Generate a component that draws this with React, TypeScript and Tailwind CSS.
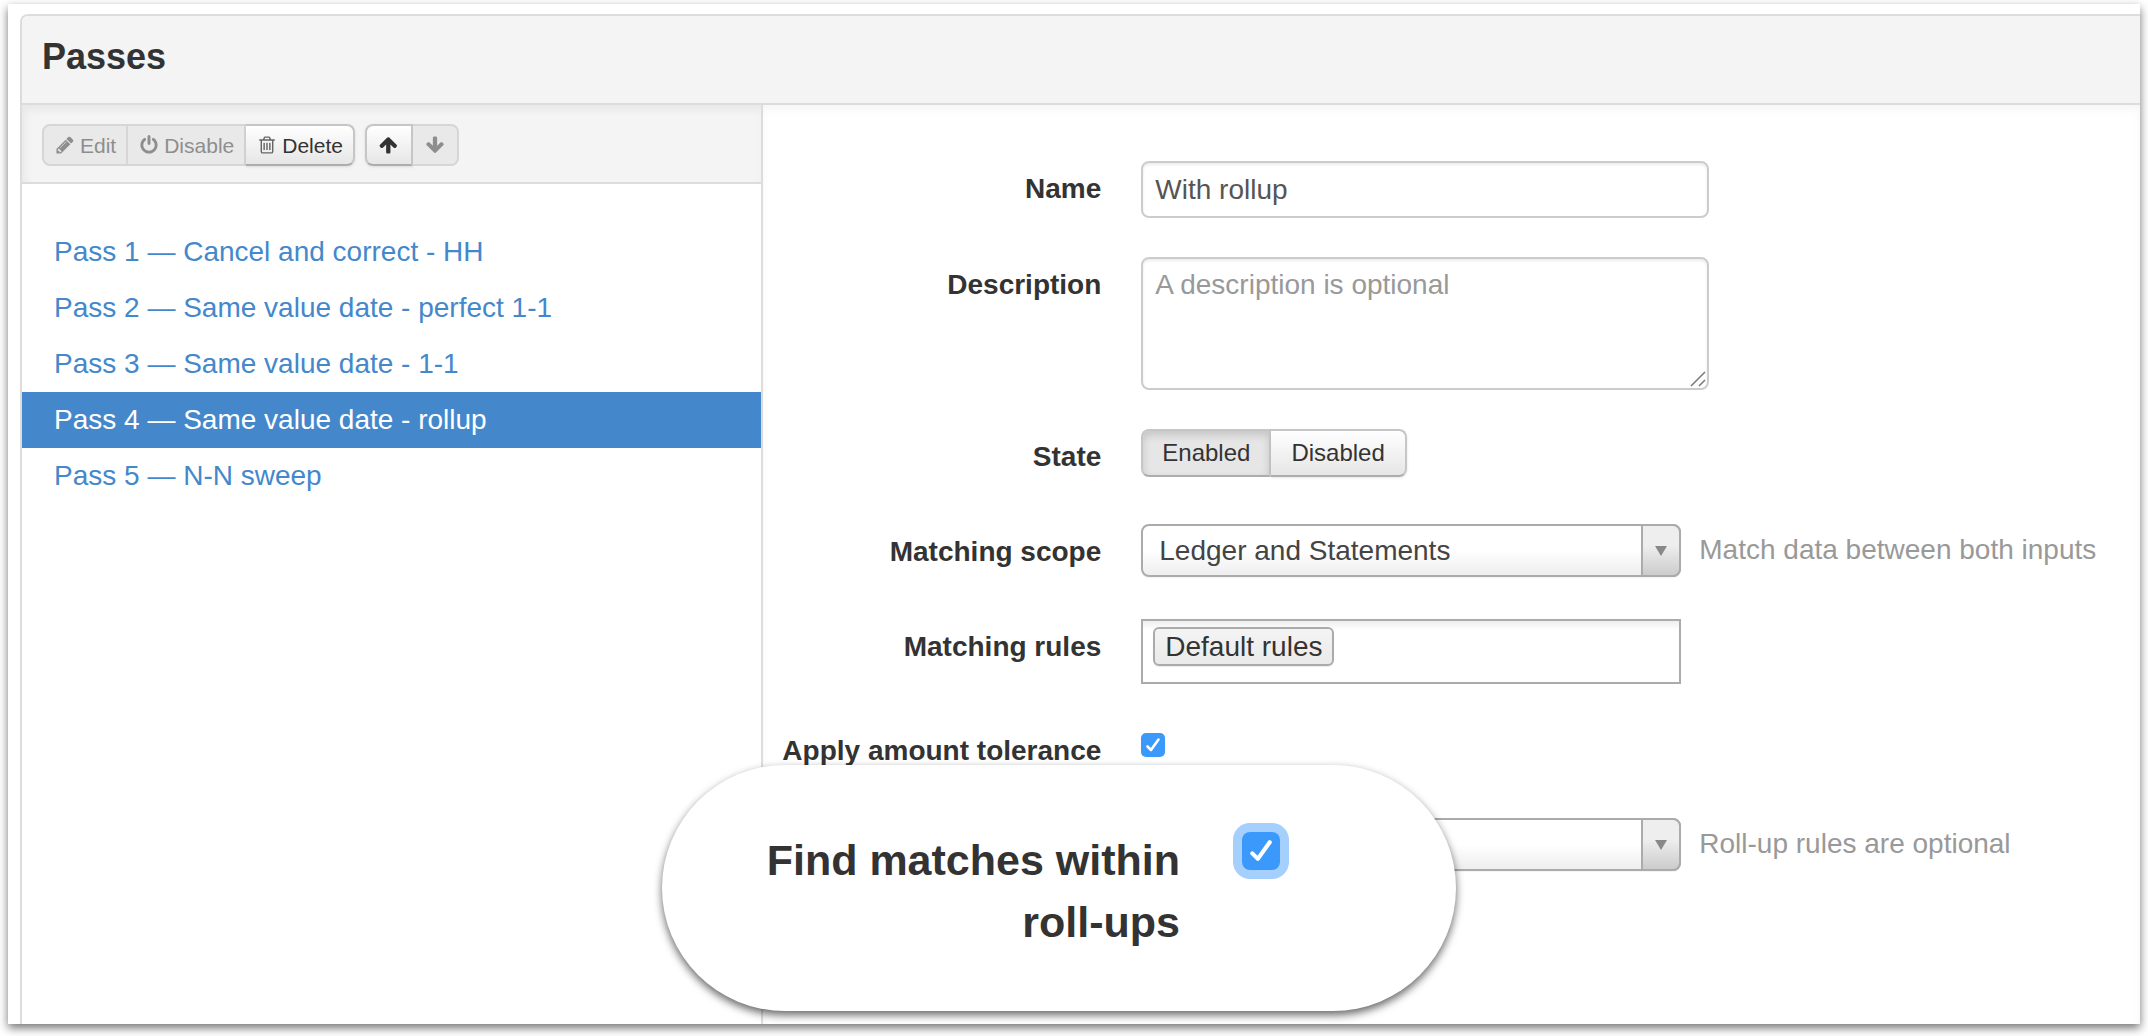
import React, { useState } from 'react';

function Icon({ d }: { d: string }) {
  return (
    <svg viewBox="0 0 1792 1792" className="mx-px size-5 shrink-0" fill="currentColor" aria-hidden="true">
      <path d={d} />
    </svg>
  );
}

const PENCIL =
  'M491 1536l91-91-235-235-91 91v107h128v128h107zm523-928q0-22-22-22-10 0-17 7l-542 542q-7 7-7 17 0 22 22 22 10 0 17-7l542-542q7-7 7-17zm-54-192l416 416-832 832h-416v-416zm683 96q0 53-37 90l-166 166-416-416 166-165q36-38 90-38 53 0 91 38l235 234q37 39 37 91z';
const POWER =
  'M1664 896q0 156-61 298t-164 245-245 164-298 61-298-61-245-164-164-245-61-298q0-182 80.5-343t226.5-270q43-32 95.5-25t83.5 50q32 42 24.5 94.5t-49.5 84.5q-98 74-151.5 181t-53.5 228q0 104 40.5 198.5t109.5 163.5 163.5 109.5 198.5 40.5 198.5-40.5 163.5-109.5 109.5-163.5 40.5-198.5q0-121-53.5-228t-151.5-181q-42-32-49.5-84.5t24.5-94.5q31-43 84-50t95 25q146 109 226.5 270t80.5 343zm-640-768v640q0 52-38 90t-90 38-90-38-38-90v-640q0-52 38-90t90-38 90 38 38 90z';
const TRASH =
  'M704 736v576q0 14-9 23t-23 9h-64q-14 0-23-9t-9-23v-576q0-14 9-23t23-9h64q14 0 23 9t9 23zm256 0v576q0 14-9 23t-23 9h-64q-14 0-23-9t-9-23v-576q0-14 9-23t23-9h64q14 0 23 9t9 23zm256 0v576q0 14-9 23t-23 9h-64q-14 0-23-9t-9-23v-576q0-14 9-23t23-9h64q14 0 23 9t9 23zm128 724v-948h-896v948q0 22 7 40.5t14.5 27 10.5 8.5h832q3 0 10.5-8.5t14.5-27 7-40.5zm-672-1076h448l-48-117q-7-9-17-11h-317q-10 2-17 11zm928 32v64q0 14-9 23t-23 9h-96v948q0 83-47 143.5t-113 60.5h-832q-66 0-113-58.5t-47-141.5v-952h-96q-14 0-23-9t-9-23v-64q0-14 9-23t23-9h309l70-167q15-37 54-63t79-26h320q40 0 79 26t54 63l70 167h309q14 0 23 9t9 23z';
const ARROW_UP =
  'M1611 971q0 51-37 90l-75 75q-38 38-91 38-54 0-90-38l-294-293v704q0 52-37.5 84.5t-90.5 32.5h-128q-53 0-90.5-32.5t-37.5-84.5v-704l-294 293q-36 38-90 38t-90-38l-75-75q-38-38-38-90 0-53 38-91l651-651q35-37 90-37 54 0 91 37l651 651q37 39 37 91z';
const ARROW_DOWN =
  'M1675 832q0 53-37 90l-651 652q-39 37-91 37-53 0-90-37l-651-652q-38-36-38-90 0-53 38-91l74-75q39-37 91-37 53 0 90 37l294 294v-704q0-52 38-90t90-38h128q52 0 90 38t38 90v704l294-294q37-37 90-37 52 0 91 37l75 75q37 39 37 91z';

const PASSES = [
  'Cancel and correct - HH',
  'Same value date - perfect 1-1',
  'Same value date - 1-1',
  'Same value date - rollup',
  'N-N sweep',
];

const raised =
  'border-[#c6c6c6] border-b-[#adadad] bg-linear-to-b from-white to-[#e6e6e6] shadow-[0_1px_3px_rgba(0,0,0,0.1)]';
const pressed = 'border-[#c6c6c6] border-b-[#adadad] bg-[#e6e6e6] shadow-[inset_0_4px_8px_rgba(0,0,0,0.15)]';
const flat = 'border-[#d6d6d6] bg-[#e9e9e9] text-[#8e8e8e]';
const toolButton = 'flex h-[42px] items-center gap-1 border-2 text-[21px] leading-none';

function Toolbar() {
  return (
    <div className="flex gap-[10px] border-b-2 border-[#dcdcdc] bg-[#f4f4f4] px-5 pt-[19px] pb-4 shadow-[inset_3px_5px_8px_rgba(0,0,0,0.05)]">
      <div className="flex">
        <button type="button" disabled className={`${toolButton} ${flat} rounded-l-lg px-[10px]`}>
          <Icon d={PENCIL} />
          Edit
        </button>
        <button type="button" disabled className={`${toolButton} ${flat} border-l-0 px-[10px]`}>
          <Icon d={POWER} />
          Disable
        </button>
        <button type="button" className={`${toolButton} ${raised} rounded-r-lg border-l-0 px-[10px]`}>
          <span className="text-[#666]">
            <Icon d={TRASH} />
          </span>
          Delete
        </button>
      </div>
      <div className="flex">
        <button type="button" aria-label="Move up" className={`${toolButton} ${raised} rounded-l-lg px-[11px]`}>
          <Icon d={ARROW_UP} />
        </button>
        <button
          type="button"
          aria-label="Move down"
          disabled
          className={`${toolButton} ${flat} rounded-r-lg border-l-0 px-[11px]`}
        >
          <Icon d={ARROW_DOWN} />
        </button>
      </div>
    </div>
  );
}

function Row({ id, label, children }: { id?: string; label?: string; children: React.ReactNode }) {
  return (
    <div className="flex min-h-14 items-start gap-10">
      <div className="w-[320px] shrink-0 pt-2 text-right font-bold leading-10">
        {label && <label htmlFor={id}>{label}</label>}
      </div>
      {children}
    </div>
  );
}

function Select({ id, label, options }: { id: string; label?: string; options: string[] }) {
  return (
    <div className="relative w-[540px]">
      <select
        id={id}
        aria-label={label}
        className="block h-[53px] w-full appearance-none rounded-lg border-2 border-[#ababab] bg-linear-to-b from-white from-50% to-[#eee] pr-12 pl-4 text-[28px] text-[#444] shadow-[0_1px_1px_rgba(0,0,0,0.05)]"
      >
        {options.map((o) => (
          <option key={o}>{o}</option>
        ))}
      </select>
      <span className="pointer-events-none absolute inset-y-0 right-0 flex w-10 items-center justify-center rounded-r-lg border-2 border-[#ababab] bg-linear-to-b from-[#eee] from-40% to-[#ccc]">
        <svg viewBox="0 0 12 10" className="h-[10px] w-3" fill="#888" aria-hidden="true">
          <path d="M0 0h12L6 10z" />
        </svg>
      </span>
    </div>
  );
}

function Hint({ children }: { children: React.ReactNode }) {
  return <p className="-ml-[22px] pt-[6px] leading-10 whitespace-nowrap text-[#999]">{children}</p>;
}

function Tick() {
  return (
    <svg
      viewBox="0 0 24 24"
      className="pointer-events-none absolute inset-0 hidden size-full peer-checked:block"
      fill="none"
      stroke="white"
      strokeWidth="2.6"
      strokeLinecap="round"
      strokeLinejoin="round"
      aria-hidden="true"
    >
      <path d="M6.500 13.500l3.500 3.500L17.500 6.500" />
    </svg>
  );
}

const field =
  'w-[568px] rounded-lg border-2 border-[#ccc] bg-white px-3 text-[28px] text-[#555] shadow-[inset_0_2px_3px_rgba(0,0,0,0.08)] placeholder:text-[#999]';

export default function App() {
  const [selected, setSelected] = useState(3);
  const [enabled, setEnabled] = useState(true);

  return (
    <div className="flex min-h-screen flex-col overflow-hidden bg-white px-2 pt-1 pb-3 font-['Liberation_Sans',Arial,sans-serif] text-[28px] text-[#333]">
      <main className="relative flex flex-1 flex-col bg-white pt-[10px] pl-3 shadow-[0_4px_9px_rgba(0,0,0,0.55)]">
        <section className="flex flex-1 flex-col rounded-tl-lg border-t-2 border-l-2 border-[#dcdcdc]">
          <header className="rounded-tl-md border-b-2 border-[#dcdcdc] bg-[#f4f4f4] px-5 pt-[21px] pb-[26px]">
            <h1 className="text-[36px] leading-10 font-bold">Passes</h1>
          </header>

          <div className="flex flex-1">
            <aside className="w-[35%] shrink-0 border-r-2 border-[#dcdcdc]">
              <Toolbar />
              <nav aria-label="Passes" className="pt-10">
                <ul>
                  {PASSES.map((name, i) => (
                    <li key={name}>
                      <a
                        href={`#pass-${i + 1}`}
                        aria-current={i === selected ? 'page' : undefined}
                        onClick={() => setSelected(i)}
                        className={`block px-8 leading-[56px] ${i === selected ? 'bg-[#4488cb] text-white' : 'text-[#4488cb]'}`}
                      >
                        Pass {i + 1} — {name}
                      </a>
                    </li>
                  ))}
                </ul>
              </nav>
            </aside>

            <form className="flex flex-1 flex-col gap-[39px] pt-14 pb-10 pl-[18px] shadow-[inset_0_5px_8px_rgba(0,0,0,0.04)]">
              <Row id="name" label="Name">
                <input id="name" type="text" defaultValue="With rollup" className={`${field} h-[57px]`} />
              </Row>

              <Row id="description" label="Description">
                <div className="relative">
                  <textarea
                    id="description"
                    placeholder="A description is optional"
                    className={`${field} block h-[133px] resize-none pt-[6px] leading-10`}
                  />
                  <svg
                    viewBox="0 0 16 16"
                    className="pointer-events-none absolute right-[3px] bottom-[3px] size-4"
                    stroke="#777"
                    strokeWidth="1.500"
                    aria-hidden="true"
                  >
                    <path d="M1 15L15 1M9 15l6-6" />
                  </svg>
                </div>
              </Row>

              <Row label="State">
                <div role="group" aria-label="State" className="flex text-[24px] leading-none">
                  <button
                    type="button"
                    aria-pressed={enabled}
                    onClick={() => setEnabled(true)}
                    className={`h-12 rounded-l-lg border-2 px-[19px] ${enabled ? pressed : raised}`}
                  >
                    Enabled
                  </button>
                  <button
                    type="button"
                    aria-pressed={!enabled}
                    onClick={() => setEnabled(false)}
                    className={`h-12 rounded-r-lg border-2 border-l-0 px-5 ${enabled ? raised : pressed}`}
                  >
                    Disabled
                  </button>
                </div>
              </Row>

              <Row id="scope" label="Matching scope">
                <Select id="scope" options={['Ledger and Statements']} />
                <Hint>Match data between both inputs</Hint>
              </Row>

              <Row id="rules" label="Matching rules">
                <div className="flex h-[65px] w-[540px] items-start border-2 border-[#ababab] bg-linear-to-b from-[#eee] to-white to-15% px-[10px] pt-[6px]">
                  <span className="shrink-0 rounded-md border-2 border-[#ababab] bg-linear-to-b from-[#f4f4f4] to-[#eaeaea] px-[10px] leading-[35px] shadow-[0_1px_1px_rgba(0,0,0,0.08)]">
                    Default rules
                  </span>
                  <input id="rules" type="text" className="h-9 min-w-0 flex-1 bg-transparent px-2 outline-none" />
                </div>
              </Row>

              <Row id="tolerance" label="Apply amount tolerance">
                <span className="relative mt-[10px] block size-6">
                  <input
                    id="tolerance"
                    type="checkbox"
                    defaultChecked
                    className="peer block size-full appearance-none rounded-[5px] border border-[#aaa] checked:border-0 checked:bg-[#3b99fc]"
                  />
                  <Tick />
                </span>
              </Row>

              <Row>
                <Select id="rollup-rules" label="Roll-up rules" options={['']} />
                <Hint>Roll-up rules are optional</Hint>
              </Row>
            </form>
          </div>
        </section>

        <div className="absolute top-[761px] left-[654px] flex h-[246px] w-[794px] items-start gap-[62px] rounded-full bg-white pt-[64px] pl-[98px] shadow-[0_4px_9px_rgba(0,0,0,0.6)]">
          <label htmlFor="within" className="w-[420px] text-right text-[43px] leading-[62px] font-bold">
            Find matches within roll-ups
          </label>
          <span className="relative mt-[3px] block size-[38px]">
            <input
              id="within"
              type="checkbox"
              defaultChecked
              className="peer block size-full appearance-none rounded-lg border border-[#aaa] shadow-[0_0_0_9px_#a5cffd] checked:border-0 checked:bg-[#3b99fc]"
            />
            <Tick />
          </span>
        </div>
      </main>
    </div>
  );
}
